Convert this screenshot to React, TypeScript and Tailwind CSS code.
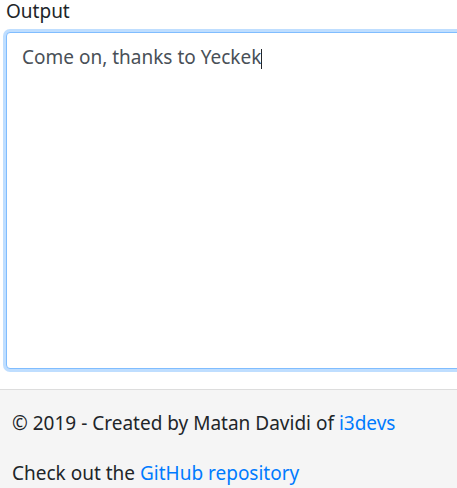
export default function App() {
  return (
    <div className="w-[457px] h-[488px] overflow-hidden bg-white font-['Noto_Sans',sans-serif] text-[19px] leading-6 text-[#212529]">
      <div className="pl-[6px]">
        <label className="block leading-[22px] mb-[10px]">Output</label>
        <div className="w-[480px] h-[337px] rounded border border-[#80bdff] shadow-[0_0_0_3px_rgba(0,123,255,0.25)] bg-white pl-[15px] pt-[12px] text-[#495057]">
          Come on, thanks to Yeckek<span className="inline-block w-px h-[20px] bg-[#212529] align-[-5px]" />
        </div>
      </div>
      <footer className="mt-[20px] border-t border-[#dddddd] bg-[#f5f5f5] h-[120px] pl-[12px] pt-[21px]">
        <p className="mb-[26px]">
          © 2019 - Created by Matan Davidi of <a className="text-[#007bff]">i3devs</a>
        </p>
        <p>
          Check out the <a className="text-[#007bff]">GitHub repository</a>
        </p>
      </footer>
    </div>
  )
}
